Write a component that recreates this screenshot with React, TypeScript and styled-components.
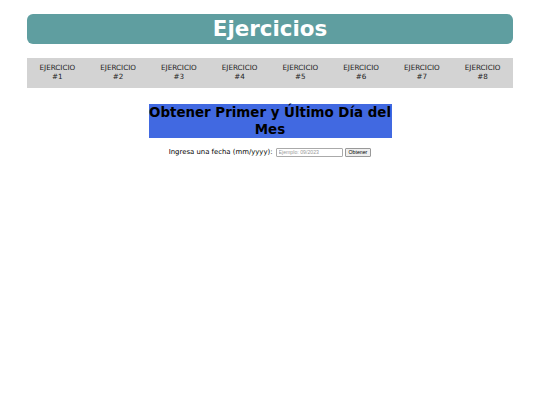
import * as React from 'react'
import styled, { createGlobalStyle } from 'styled-components'

const GlobalStyle = createGlobalStyle`
  body {
    margin: 0;
    background: #fff;
    font-family: 'DejaVu Sans', Verdana, sans-serif;
  }
`

const Page = styled.div`
  width: 486px;
  margin: 0 auto;
  padding-top: 14px;
  display: flex;
  flex-direction: column;
  align-items: center;
`

const Header = styled.header`
  width: 100%;
  height: 30px;
  background: #5f9ea0;
  border-radius: 6px;
  color: #fff;
  font-size: 21.4px;
  font-weight: bold;
  line-height: 30px;
  text-align: center;
`

const Nav = styled.nav`
  width: 100%;
  margin-top: 14px;
  padding: 6px 0;
  background: #d3d3d3;
  display: flex;
`

const NavItem = styled.a`
  flex: 1;
  text-align: center;
  font-size: 7.2px;
  line-height: 8.8px;
  color: #222;
  text-decoration: none;
`

const Title = styled.h2`
  width: 243px;
  margin: 16px 0 0;
  background: #4169e1;
  color: #000;
  font-size: 13.4px;
  font-weight: bold;
  line-height: 17px;
  text-align: center;
`

const Form = styled.form`
  margin-top: 10px;
  display: flex;
  align-items: center;
  gap: 2px;
  font-size: 6.9px;
  color: #000;
`

const Label = styled.label`
  margin-right: 1px;
`

const DateInput = styled.input`
  box-sizing: border-box;
  width: 67px;
  height: 9.5px;
  padding: 0 2px;
  border: 1px solid #aaa;
  border-radius: 1px;
  font-family: 'Liberation Sans', Arial, sans-serif;
  font-size: 5.2px;
  &::placeholder {
    color: #999;
  }
`

const Button = styled.button`
  box-sizing: border-box;
  height: 9.5px;
  padding: 0 3px;
  border: 1px solid #999;
  border-radius: 1px;
  background: #efefef;
  font-family: 'Liberation Sans', Arial, sans-serif;
  font-size: 5.2px;
  color: #000;
  line-height: 1;
`

export default function App() {
  const items = [1, 2, 3, 4, 5, 6, 7, 8]
  return (
    <>
      <GlobalStyle />
      <Page>
        <Header>Ejercicios</Header>
        <Nav>
          {items.map(n => (
            <NavItem key={n} href="#">
              EJERCICIO
              <br />#{n}
            </NavItem>
          ))}
        </Nav>
        <Title>Obtener Primer y Último Día del Mes</Title>
        <Form onSubmit={e => e.preventDefault()}>
          <Label>Ingresa una fecha (mm/yyyy):</Label>
          <DateInput type="text" placeholder="Ejemplo: 09/2023" />
          <Button type="submit">Obtener</Button>
        </Form>
      </Page>
    </>
  )
}
